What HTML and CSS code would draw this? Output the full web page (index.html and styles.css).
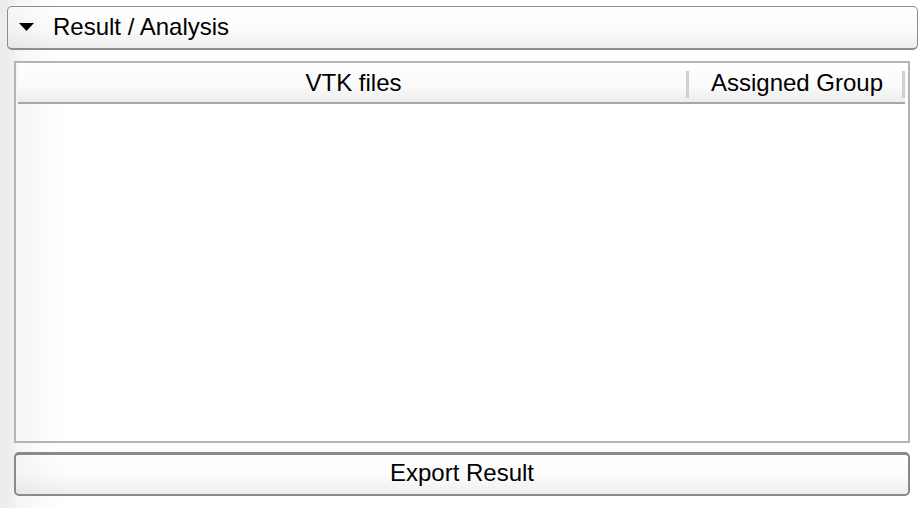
FILE: index.html
```html
<!DOCTYPE html>
<html lang="en">
<head>
    <meta charset="UTF-8">
    <meta name="viewport" content="width=device-width, initial-scale=1.0">
    <title>Result / Analysis</title>
    <link rel="stylesheet" href="styles.css">
</head>
<body>
    <button class="section-toggle">
        <svg class="arrow" width="15" height="8" viewBox="0 0 15 8">
            <polygon points="0,0 15,0 7.5,8" fill="#000"/>
        </svg>
        <span>Result / Analysis</span>
    </button>

    <div class="table-frame">
        <table class="result-table">
            <thead>
                <tr>
                    <th class="col-file">VTK files</th>
                    <th class="col-group">Assigned Group</th>
                </tr>
            </thead>
            <tbody>
            </tbody>
        </table>
    </div>

    <button class="export-btn">Export Result</button>
</body>
</html>
```

FILE: styles.css
```css
html, body {
    height: 100%;
}

body {
    margin: 0;
    box-sizing: border-box;
    padding: 6px 6px 12px 7px;
    display: flex;
    flex-direction: column;
    font-family: "Liberation Sans", Arial, sans-serif;
    font-size: 24px;
    color: #000;
    background: linear-gradient(to right, #ececec 0, #f0f0f0 14px, #f5f5f5 16px, #fcfcfc 44px, #fff 64px);
}

button {
    font-family: inherit;
    font-size: 24px;
    color: #000;
    cursor: default;
}

.section-toggle {
    height: 44px;
    display: flex;
    align-items: center;
    padding: 0 0 2px 11px;
    border: 1px solid #8e8e8e;
    border-bottom-width: 2px;
    border-radius: 5px;
    background: linear-gradient(to right, rgba(0, 0, 0, 0.035), rgba(0, 0, 0, 0) 50px),
                linear-gradient(#fff, #fbfbfb 55%, #eeeeee);
    text-align: left;
}

.section-toggle .arrow {
    margin-right: 19px;
    flex-shrink: 0;
}

.table-frame {
    flex: 1;
    margin: 11px 8px 0 7px;
    border: 2px solid #b4b4b4;
    padding: 0 2px;
}

.result-table {
    border-collapse: collapse;
    table-layout: fixed;
    width: 887px;
}

.result-table th {
    height: 39px;
    padding: 0;
    font-weight: normal;
    text-align: center;
    border-bottom: 2px solid #a6a6a6;
    background:
        linear-gradient(#d0d0d0, #d0d0d0) no-repeat right 0 top 8px / 3px 27px,
        linear-gradient(#fff, #fafafa 60%, #ececec);
}

.col-file {
    width: 671px;
}

.col-group {
    width: 216px;
}

.export-btn {
    height: 44px;
    margin: 9px 8px 0 7px;
    padding: 0 0 3px;
    border: 2px solid #8a8a8a;
    border-top-width: 3px;
    border-radius: 5px;
    background: linear-gradient(to right, rgba(0, 0, 0, 0.035), rgba(0, 0, 0, 0) 50px),
                linear-gradient(#fff, #fbfbfb 55%, #eeeeee);
    text-align: center;
}
```
